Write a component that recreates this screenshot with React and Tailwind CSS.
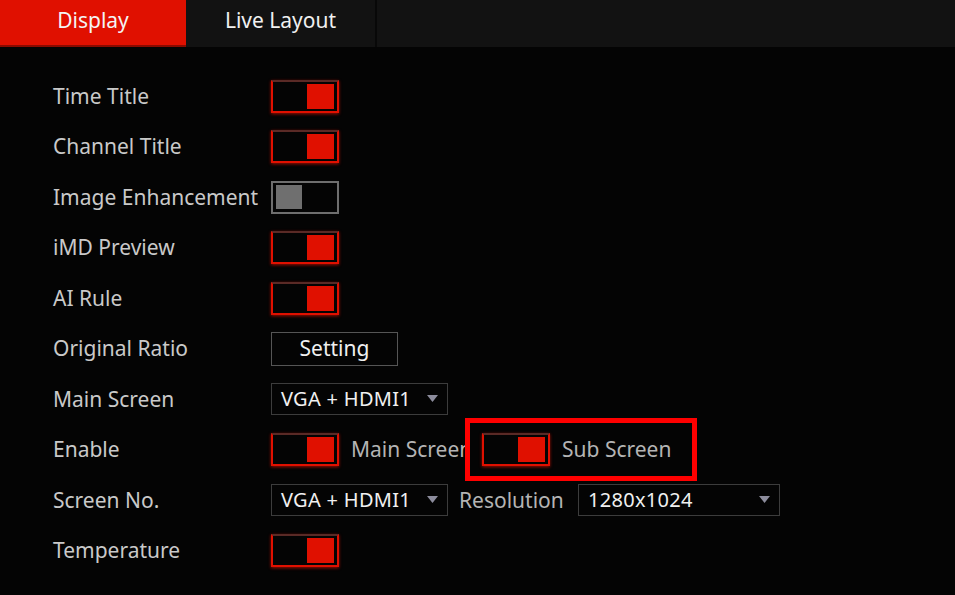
import React from "react"

const font = { fontFamily: "'Noto Sans', 'Open Sans', sans-serif" }

function Toggle({ on = true }) {
  if (!on) {
    return (
      <div className="flex h-[33px] w-[68px] shrink-0 items-center border-2 border-[#6e6e6e] p-[3px]">
        <div className="h-[24px] w-[26px] bg-[#6f6f6f]" />
      </div>
    )
  }
  return (
    <div className="flex h-[33px] w-[68px] shrink-0 items-center justify-end border-2 border-[#e01000] border-t-[#5a2a26] p-[3px] shadow-[0_1px_3px_rgba(255,20,0,0.6)]">
      <div className="h-[25px] w-[27px] bg-[#e01000]" />
    </div>
  )
}

function Select({ value, width }) {
  return (
    <div
      className={`flex h-[32px] ${width} shrink-0 items-center justify-between border border-[#3c3c3c] pl-[9px] pr-[9px] text-[20px] tracking-[0.3px] text-[#f0f0f0]`}
    >
      <span>{value}</span>
      <svg width="11" height="8" viewBox="0 0 11 8">
        <polygon points="0,0 11,0 5.5,7" fill="#8c8c9c" />
      </svg>
    </div>
  )
}

function Row({ label, children }) {
  return (
    <div className="flex h-[50.5px] items-center">
      <div className="w-[218px] shrink-0 text-[21px] text-[#c9c9c9]">{label}</div>
      {children}
    </div>
  )
}

export default function App() {
  return (
    <div className="h-[595px] w-[955px] overflow-hidden bg-[#040404]" style={font}>
      <div className="flex h-[47px] bg-[#121212]">
        <div className="flex w-[186px] items-center justify-center border-b-2 border-[#8a0a00] bg-[#e01000] pb-[4px] text-[21px] text-[#f4f4f4]">
          Display
        </div>
        <div className="flex w-[191px] items-center justify-center border-r-2 border-[#080808] pb-[6px] text-[21px] text-[#f0f0f0]">
          Live Layout
        </div>
      </div>

      <div className="pl-[53px] pt-[24px]">
        <Row label="Time Title"><Toggle /></Row>
        <Row label="Channel Title"><Toggle /></Row>
        <Row label="Image Enhancement"><Toggle on={false} /></Row>
        <Row label="iMD Preview"><Toggle /></Row>
        <Row label="AI Rule"><Toggle /></Row>
        <Row label="Original Ratio">
          <div className="flex h-[34px] w-[127px] items-center justify-center border border-[#555] text-[21px] text-[#f0f0f0]">
            Setting
          </div>
        </Row>
        <Row label="Main Screen">
          <Select value="VGA + HDMI1" width="w-[177px]" />
        </Row>
        <Row label="Enable">
          <Toggle />
          <div className="ml-[12px] w-[114px] shrink-0 overflow-hidden whitespace-nowrap text-[21px] text-[#b4b4b4]">
            Main Screen
          </div>
          <div className="flex h-[63px] w-[232px] shrink-0 items-center border-[5px] border-[#ff0000] pl-[12px]">
            <Toggle />
            <span className="ml-[12px] text-[21px] text-[#b4b4b4]">Sub Screen</span>
          </div>
        </Row>
        <Row label="Screen No.">
          <Select value="VGA + HDMI1" width="w-[177px]" />
          <span className="ml-[11px] w-[119px] shrink-0 text-[21px] text-[#b4b4b4]">Resolution</span>
          <Select value="1280x1024" width="w-[202px]" />
        </Row>
        <Row label="Temperature"><Toggle /></Row>
      </div>
    </div>
  )
}
